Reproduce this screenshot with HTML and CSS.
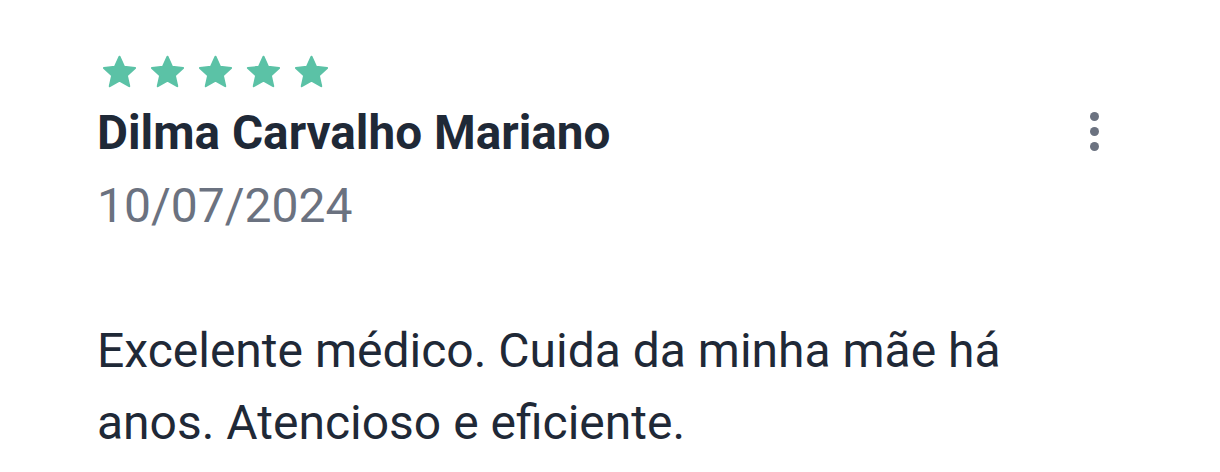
FILE: index.html
```html
<!DOCTYPE html>
<html lang="pt">
<head>
<meta charset="utf-8">
<link rel="stylesheet" href="styles.css">
</head>
<body>
<div class="review">
  <div class="head">
    <div class="meta">
      <div class="stars">
        <svg class="star" viewBox="0 0 24 24"><path d="M12 2.8l2.7 5.9 6.4.7-4.8 4.3 1.4 6.3L12 16.8 6.3 20l1.4-6.3-4.8-4.3 6.4-.7z"/></svg>
        <svg class="star" viewBox="0 0 24 24"><path d="M12 2.8l2.7 5.9 6.4.7-4.8 4.3 1.4 6.3L12 16.8 6.3 20l1.4-6.3-4.8-4.3 6.4-.7z"/></svg>
        <svg class="star" viewBox="0 0 24 24"><path d="M12 2.8l2.7 5.9 6.4.7-4.8 4.3 1.4 6.3L12 16.8 6.3 20l1.4-6.3-4.8-4.3 6.4-.7z"/></svg>
        <svg class="star" viewBox="0 0 24 24"><path d="M12 2.8l2.7 5.9 6.4.7-4.8 4.3 1.4 6.3L12 16.8 6.3 20l1.4-6.3-4.8-4.3 6.4-.7z"/></svg>
        <svg class="star" viewBox="0 0 24 24"><path d="M12 2.8l2.7 5.9 6.4.7-4.8 4.3 1.4 6.3L12 16.8 6.3 20l1.4-6.3-4.8-4.3 6.4-.7z"/></svg>
      </div>
      <div class="name">Dilma Carvalho Mariano</div>
      <div class="date">10/07/2024</div>
    </div>
    <div class="kebab"><span></span><span></span><span></span></div>
  </div>
  <p class="text">Excelente médico. Cuida da minha mãe há<br>anos. Atencioso e eficiente.</p>
</div>
</body>
</html>
```
FILE: styles.css
```css
html, body {
  margin: 0;
  padding: 0;
  background: #ffffff;
}
body {
  font-family: Roboto, "Noto Sans", sans-serif;
  width: 1220px;
  height: 472px;
  overflow: hidden;
}
.review {
  padding: 52px 0 0 97px;
  width: 1002px;
}
.head {
  display: flex;
  justify-content: space-between;
  align-items: flex-start;
}
.meta {
  display: flex;
  flex-direction: column;
}
.stars {
  display: flex;
  gap: 7px;
  margin-left: 2px;
}
.star {
  width: 41px;
  height: 41px;
  fill: #5bc2a6;
  stroke: #5bc2a6;
  stroke-width: 1.2;
  stroke-linejoin: round;
}
.name {
  font-size: 47.7px;
  font-weight: 700;
  color: #1f2937;
  line-height: 56px;
  margin-top: 12px;
}
.date {
  font-size: 48px;
  color: #6b7280;
  line-height: 56px;
  margin-top: 17px;
}
.kebab {
  display: flex;
  flex-direction: column;
  gap: 6px;
  margin-top: 60px;
}
.kebab span {
  width: 9px;
  height: 9px;
  border-radius: 50%;
  background: #6b7280;
}
.text {
  margin: 81px 0 0 0;
  font-size: 48px;
  line-height: 72px;
  color: #1f2937;
}
```
